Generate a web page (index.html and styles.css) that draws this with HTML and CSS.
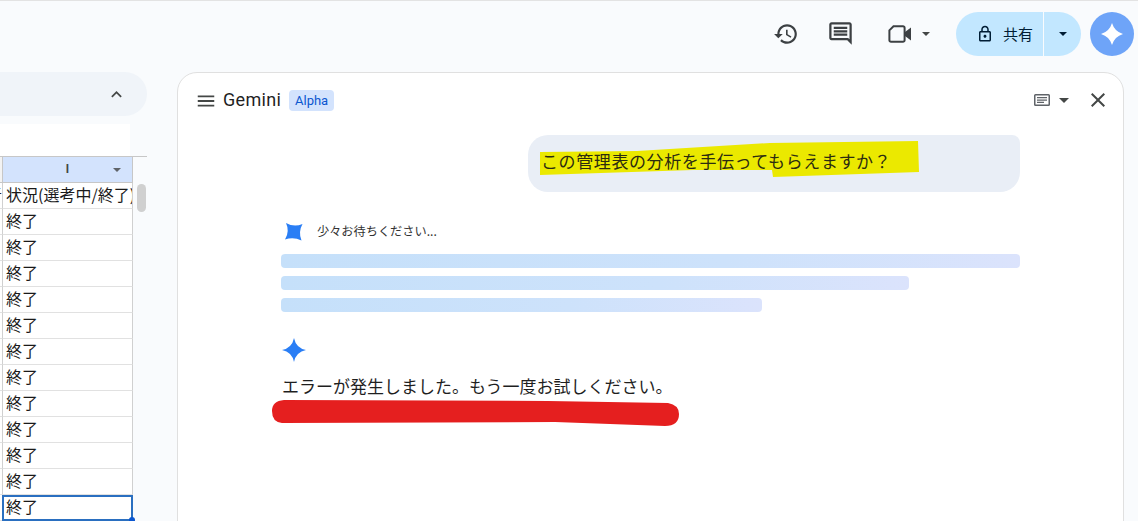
FILE: index.html
```html
<!DOCTYPE html>
<html lang="ja">
<head>
<meta charset="utf-8">
<title>Gemini</title>
<link rel="stylesheet" href="styles.css">
</head>
<body>
<header class="topbar">
  <svg class="tb-icon history" viewBox="0 0 24 24"><path d="M13 3c-4.97 0-9 4.03-9 9H1l3.89 3.89.07.14L9 12H6c0-3.87 3.13-7 7-7s7 3.13 7 7-3.13 7-7 7c-1.93 0-3.68-.79-4.94-2.06l-1.42 1.42C8.27 19.99 10.51 21 13 21c4.97 0 9-4.03 9-9s-4.03-9-9-9zm-1 5v5l4.28 2.54.72-1.21-3.5-2.08V8H12z"/></svg>
  <svg class="tb-icon comment" viewBox="0 0 24 24"><path d="M21.99 4c0-1.1-.89-2-1.99-2H4c-1.1 0-2 .9-2 2v12c0 1.1.9 2 2 2h14l4 4-.01-18zM20 4v13.17L18.83 16H4V4h16zM6 12h12v2H6zm0-3h12v2H6zm0-3h12v2H6z"/></svg>
  <svg class="video" viewBox="0 0 24 18"><path d="M5.500 1.200H15a1.600 1.600 0 0 1 1.600 1.600v12.400a1.600 1.600 0 0 1-1.600 1.600H3a1.600 1.600 0 0 1-1.600-1.600V5.300z" fill="none" stroke="#3c4043" stroke-width="2"/><path d="M17 7l6-4.500v13L17 11z" fill="#3c4043"/></svg>
  <span class="caret video-caret"></span>
  <div class="share">
    <div class="share-main">
      <svg class="lock" viewBox="0 0 24 24"><path d="M18 8h-1V6c0-2.760-2.240-5-5-5S7 3.240 7 6v2H6c-1.100 0-2 .9-2 2v10c0 1.100.9 2 2 2h12c1.100 0 2-.9 2-2V10c0-1.100-.9-2-2-2zM9 6c0-1.660 1.340-3 3-3s3 1.340 3 3v2H9V6zm9 14H6V10h12v10zm-6-3c1.100 0 2-.9 2-2s-.9-2-2-2-2 .9-2 2 .9 2 2 2z"/></svg>
      <span class="share-label">共有</span>
    </div>
    <div class="share-more"><span class="caret dark"></span></div>
  </div>
  <div class="avatar">
    <svg viewBox="0 0 24 24"><path d="M12 1Q14.500 9.500 23 12Q14.500 14.500 12 23Q9.500 14.500 1 12Q9.500 9.500 12 1Z" fill="#fff"/></svg>
  </div>
</header>

<main class="workspace">
  <section class="sheet-side">
    <div class="collapse-bar">
      <svg class="chev" viewBox="0 0 24 24"><path d="M7.410 15.410 12 10.830l4.590 4.580L18 14l-6-6-6 6z"/></svg>
    </div>
    <div class="formula-space"></div>
    <div class="grid">
      <div class="grid-main">
        <div class="row head">
          <div class="stub"></div>
          <div class="col-head">I<span class="col-caret"></span></div>
        </div>
        <div class="row"><div class="stub">者</div><div class="cell">状況(選考中/終了)</div></div>
        <div class="row"><div class="stub"></div><div class="cell">終了</div></div>
        <div class="row"><div class="stub"></div><div class="cell">終了</div></div>
        <div class="row"><div class="stub"></div><div class="cell">終了</div></div>
        <div class="row"><div class="stub"></div><div class="cell">終了</div></div>
        <div class="row"><div class="stub"></div><div class="cell">終了</div></div>
        <div class="row"><div class="stub"></div><div class="cell">終了</div></div>
        <div class="row"><div class="stub"></div><div class="cell">終了</div></div>
        <div class="row"><div class="stub"></div><div class="cell">終了</div></div>
        <div class="row"><div class="stub"></div><div class="cell">終了</div></div>
        <div class="row"><div class="stub"></div><div class="cell">終了</div></div>
        <div class="row"><div class="stub"></div><div class="cell">終了</div></div>
        <div class="row"><div class="stub"></div><div class="cell selected">終了<span class="handle"></span></div></div>
      </div>
      <div class="scroll-rail"><div class="scroll-thumb"></div></div>
    </div>
  </section>

  <section class="panel">
    <div class="panel-head">
      <svg class="menu" viewBox="0 0 24 24"><path d="M3 18h18v-2H3v2zm0-5h18v-2H3v2zm0-7v2h18V6H3z"/></svg>
      <span class="panel-title">Gemini</span>
      <span class="badge">Alpha</span>
      <div class="panel-actions">
        <svg class="article" viewBox="0 0 16 12"><path d="M1.500 0h13A1.500 1.500 0 0 1 16 1.500v9a1.500 1.500 0 0 1-1.500 1.500h-13A1.500 1.500 0 0 1 0 10.500v-9A1.500 1.500 0 0 1 1.500 0zM1.500 1.500v9h13v-9zM3 3h10v1.300H3zM3 5.400h10v1.300H3zM3 7.800h7v1.300H3z" fill-rule="evenodd"/></svg>
        <span class="caret panel-caret"></span>
        <svg class="close" viewBox="0 0 24 24"><path d="M19 6.410 17.590 5 12 10.590 6.410 5 5 6.410 10.590 12 5 17.590 6.410 19 12 13.410 17.590 19 19 17.590 13.410 12z"/></svg>
      </div>
    </div>
    <div class="chat">
      <div class="bubble">
        <svg class="marker" viewBox="0 0 380 37"><path d="M0 11 L97 10 L230 2 L378 0 L379 31 L233 36 L232 29 L153 29 L0 34Z" fill="#ebe900"/></svg>
        <span class="bubble-text">この管理表の分析を手伝ってもらえますか？</span>
      </div>
      <div class="loading">
        <div class="wait">
          <svg class="spin-star" viewBox="0 0 20 20"><path d="M2 1Q10 5.500 18.500 2Q14 10 17.500 18.500Q9.500 14.500 1 17.500Q6 9.500 2 1Z" fill="#2a7ef5"/></svg>
          <span class="wait-text">少々お待ちください...</span>
        </div>
        <div class="bar bar-1"></div>
        <div class="bar bar-2"></div>
        <div class="bar bar-3"></div>
      </div>
      <div class="answer">
        <svg class="answer-star" viewBox="0 0 24 24"><path d="M12 0Q14 10 24 12Q14 14 12 24Q10 14 0 12Q10 10 12 0Z" fill="#2a7ef5"/></svg>
        <p class="error">エラーが発生しました。もう一度お試しください。</p>
        <svg class="redline" viewBox="0 0 408 27"><path d="M12 0 L276 1 L396 3 Q407 5 407 14 Q407 26 393 26 L283 22 L10 23 Q0 22 0 11 Q0 1 12 0Z" fill="#e51f1f"/></svg>
      </div>
    </div>
  </section>
</main>
</body>
</html>
```

FILE: styles.css
```css
* { box-sizing: border-box; }
html, body { height: 100%; }
body {
  margin: 0;
  height: 521px;
  overflow: hidden;
  background: #f9fbfd;
  border-top: 1px solid #e3e3e3;
  font-family: "Noto Sans CJK JP", "Noto Sans", sans-serif;
  color: #1f1f1f;
}
.topbar {
  height: 71px;
  display: flex;
  align-items: center;
  padding: 0 4px 6px 0;
  justify-content: flex-end;
}
.tb-icon { width: 26px; height: 26px; fill: #3c4043; }
.comment { margin-left: 28px; margin-right: 34px; width: 27px; height: 27px; }
.video { width: 24px; height: 18px; }
.caret {
  display: inline-block;
  width: 0; height: 0;
  border-left: 4px solid transparent;
  border-right: 4px solid transparent;
  border-top: 4px solid #444746;
}
.video-caret { margin-left: 10px; margin-right: 26px; }
.share {
  width: 125px; height: 44px;
  display: flex;
  margin-right: 9px;
}
.share-main {
  width: 87px;
  background: #c2e7ff;
  border-radius: 22px 0 0 22px;
  display: flex;
  align-items: center;
  padding-left: 20px;
  margin-right: 1px;
}
.lock { width: 18px; height: 18px; fill: #001d35; }
.share-label { margin-left: 9px; font-size: 15px; color: #001d35; }
.share-more {
  flex: 1;
  background: #c2e7ff;
  border-radius: 0 22px 22px 0;
  display: flex;
  align-items: center;
  padding-left: 15px;
}
.caret.dark { border-top-color: #001d35; }
.avatar {
  width: 44px; height: 44px;
  border-radius: 50%;
  background: #6ea4f8;
  display: flex;
  align-items: center;
  justify-content: center;
}
.avatar svg { width: 24px; height: 24px; }

.workspace { display: flex; height: 449px; }
.sheet-side { width: 147px; flex: none; }
.collapse-bar {
  height: 44px;
  background: #f0f4f9;
  border-radius: 0 22px 22px 0;
  display: flex;
  align-items: center;
  justify-content: flex-end;
  padding-right: 20px;
}
.chev { width: 21px; height: 21px; fill: #444746; }
.formula-space { height: 32px; width: 130px; margin-top: 8px; background: #fff; }
.grid { display: flex; border-top: 1px solid #c7c7c7; }
.grid-main { width: 133px; background: #fff; }
.row { display: flex; height: 26px; }
.stub {
  width: 2px;
  flex: none;
  overflow: hidden;
  font-size: 16px;
  line-height: 23px;
  direction: rtl;
  white-space: nowrap;
  border-bottom: 1px solid #e1e1e1;
}
.head .stub { background: #f3f3f3; border-bottom-color: #c7c7c7; }
.col-head {
  flex: 1;
  background: #d3e3fd;
  border-left: 1px solid #c7c7c7;
  border-right: 1px solid #c7c7c7;
  border-bottom: 1px solid #c7c7c7;
  font: 700 12px/25px "Liberation Sans", sans-serif;
  color: #444746;
  text-align: center;
  position: relative;
}
.col-caret {
  position: absolute;
  right: 11px; top: 11px;
  width: 0; height: 0;
  border-left: 4px solid transparent;
  border-right: 4px solid transparent;
  border-top: 4px solid #5f6368;
}
.cell {
  flex: 1;
  min-width: 0;
  border-left: 1px solid #d0d0d0;
  border-right: 1px solid #d0d0d0;
  border-bottom: 1px solid #e1e1e1;
  font-size: 16px;
  line-height: 23px;
  padding-left: 3px;
  white-space: nowrap;
  overflow: hidden;
  color: #1a1a1a;
  position: relative;
}
.cell.selected {
  border: 2px solid #2a6fc0;
  line-height: 19px;
  padding-left: 2px;
  overflow: visible;
}
.handle {
  position: absolute;
  right: -4px; bottom: -4px;
  width: 6px; height: 6px;
  border-radius: 50%;
  background: #0b57d0;
}
.scroll-rail { flex: 1; padding: 27px 1px 0 4px; background: #f9fbfd; }
.scroll-thumb { height: 28px; background: #d0d0d0; border-radius: 5px; }

.panel {
  margin-left: 30px;
  width: 947px;
  height: 470px;
  flex: none;
  background: #fff;
  border: 1px solid #e0e0e0;
  border-radius: 20px 20px 0 0;
}
.panel-head {
  display: flex;
  align-items: center;
  height: 54px;
  padding: 0 16px 0 18px;
}
.menu { width: 22px; height: 22px; fill: #444746; margin-right: 6px; margin-left: -1px; margin-top: 1px; }
.panel-title { font: 400 18px/24px Roboto, sans-serif; letter-spacing: .3px; color: #1f1f1f; }
.badge {
  margin-left: 8px;
  width: 45px; height: 21px;
  background: #d3e3fd;
  color: #0b57d0;
  border-radius: 4px;
  font: 400 13px/21px Roboto, sans-serif;
  text-align: center;
}
.panel-actions { margin-left: auto; display: flex; align-items: center; }
.article { width: 16px; height: 12px; fill: #5f6368; }
.panel-caret { margin-left: 9px; border-left-width: 5px; border-right-width: 5px; border-top-width: 5px; }
.close { width: 24px; height: 24px; fill: #444746; margin-left: 17px; margin-right: -3px; }

.chat { padding: 8px 103px 0 103px; }
.bubble {
  position: relative;
  margin-left: 247px;
  height: 57px;
  background: #e9eef6;
  border-radius: 20px 8px 20px 20px;
  padding: 11px 0 0 13px;
  font-size: 17px;
  line-height: 30px;
  letter-spacing: .6px;
  white-space: nowrap;
}
.marker { position: absolute; left: 12px; top: 6px; width: 380px; height: 37px; }
.bubble-text { position: relative; color: #2c2c10; }
.wait {
  display: flex;
  align-items: center;
  margin-top: 27px;
  height: 26px;
  font-size: 12.2px;
  color: #333;
}
.wait-text { margin-top: -3px; }
.spin-star { width: 20px; height: 20px; margin-left: 3px; margin-right: 13px; }
.bar {
  height: 14px;
  border-radius: 4px;
  background: linear-gradient(90deg, #c5e0fa 0%, #cde2fb 60%, #dbe3fc 100%);
  margin-top: 8px;
}
.bar-1 { margin-top: 9px; }
.bar-2 { width: 628px; }
.bar-3 { width: 481px; }
.answer { position: relative; margin-top: 26px; }
.answer-star { display: block; width: 24px; height: 24px; margin-left: 1px; }
.error {
  margin: 11px 0 0 1px;
  font-size: 17px;
  line-height: 26px;
  color: #1f1f1f;
  white-space: nowrap;
}
.redline { position: absolute; left: -9px; top: 62px; width: 408px; height: 27px; }
```
